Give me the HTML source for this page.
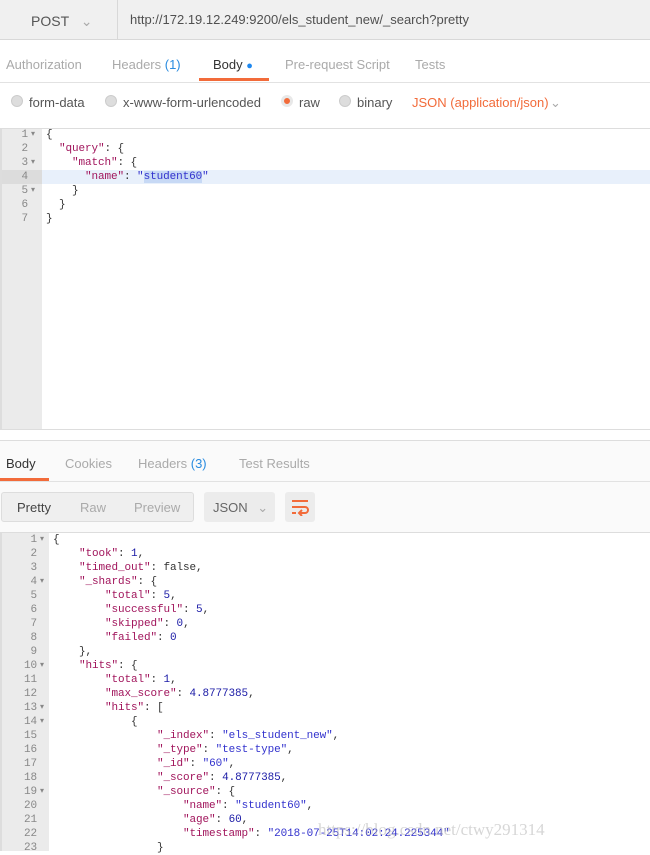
<!DOCTYPE html>
<html><head><meta charset="utf-8"><style>
*{margin:0;padding:0;box-sizing:border-box}
body{width:650px;height:851px;overflow:hidden;background:#fff;font-family:"Liberation Sans",sans-serif;position:relative;color:#333}
.abs{position:absolute}
.top{left:0;top:0;width:650px;height:40px;background:#f0f0f0;border-bottom:1px solid #d8d8d8}
.post{left:2px;top:0;width:116px;height:40px;border-right:1px solid #d8d8d8;font-size:14px;color:#555;padding:13px 0 0 29px}
.url{left:130px;top:12px;font-size:13px;color:#505050}
.tab{font-size:13px;color:#aaa;top:57px}
.radio{width:12px;height:12px;border-radius:50%;background:#ddd;border:1px solid #ccc;top:95px}
.rl{font-size:13px;color:#555;top:95px}
.mono{font-family:"Liberation Mono",monospace;font-size:11px;letter-spacing:-0.1px;white-space:pre;line-height:14px}
.k{color:#a1155c}.s{color:#3232cd}.n{color:#1a1aa6}
.ln{color:#888;text-align:right}
</style></head><body>
<div class="abs top"></div>
<div class="abs post">POST <span style="color:#aaa;margin-left:8px">&#8964;</span></div>
<div class="abs url">http://172.19.12.249:9200/els_student_new/_search?pretty</div>

<div class="abs tab" style="left:6px">Authorization</div>
<div class="abs tab" style="left:112px">Headers <span style="color:#2a8ce0">(1)</span></div>
<div class="abs tab" style="left:213px;color:#333">Body <span style="color:#1e88f0;font-size:11px">●</span></div>
<div class="abs" style="left:199px;top:78px;width:70px;height:3px;background:#f26b3a"></div>
<div class="abs tab" style="left:285px">Pre-request Script</div>
<div class="abs tab" style="left:415px">Tests</div>
<div class="abs" style="left:0;top:82px;width:650px;height:1px;background:#e2e2e2"></div>

<div class="abs radio" style="left:11px"></div><div class="abs rl" style="left:29px">form-data</div>
<div class="abs radio" style="left:105px"></div><div class="abs rl" style="left:123px">x-www-form-urlencoded</div>
<div class="abs radio" style="left:281px;background:#f26b3a;border:3px solid #e8e8e8"></div><div class="abs rl" style="left:299px">raw</div>
<div class="abs radio" style="left:339px"></div><div class="abs rl" style="left:357px">binary</div>
<div class="abs rl" style="left:412px;color:#f26b3a">JSON (application/json)</div>
<div class="abs rl" style="left:550px;color:#aaa">&#8964;</div>

<!-- request editor -->
<div class="abs" style="left:0;top:128px;width:650px;height:302px;border-top:1px solid #ddd;border-left:2px solid #ddd;border-bottom:1px solid #ddd"></div>
<div class="abs" style="left:2px;top:129px;width:40px;height:300px;background:#ebebeb"></div>
<div class="abs" style="left:2px;top:170px;width:40px;height:14px;background:#dcdcdc"></div>
<div class="abs" style="left:42px;top:170px;width:608px;height:14px;background:#e8f0fb"></div>
<div class="abs mono ln" style="left:2px;top:128px;width:26px">1
2
3
4
5
6
7</div>
<div class="abs mono" style="left:31px;top:128px;color:#888;font-size:8px">▾

▾

▾</div>
<div class="abs mono" style="left:46px;top:128px;color:#333">{
  <span class="k">"query"</span>: {
    <span class="k">"match"</span>: {
      <span class="k">"name"</span>: <span class="s">"<span style="background:#c7d9f5">student60</span>"</span>
    }
  }
}</div>

<!-- response -->
<div class="abs" style="left:0;top:440px;width:650px;height:92px;background:#fafafa;border-top:1px solid #ddd"></div>
<div class="abs tab" style="left:6px;top:456px;color:#333">Body</div>
<div class="abs tab" style="left:65px;top:456px">Cookies</div>
<div class="abs tab" style="left:138px;top:456px">Headers <span style="color:#2a8ce0">(3)</span></div>
<div class="abs tab" style="left:239px;top:456px">Test Results</div>
<div class="abs" style="left:0;top:478px;width:49px;height:3px;background:#f26b3a"></div>
<div class="abs" style="left:0;top:481px;width:650px;height:1px;background:#e2e2e2"></div>
<div class="abs" style="left:1px;top:492px;width:193px;height:30px;background:#efefef;border:1px solid #ddd;border-radius:3px"></div>
<div class="abs" style="left:17px;top:500px;font-size:13px;color:#444">Pretty</div>
<div class="abs" style="left:80px;top:500px;font-size:13px;color:#aaa">Raw</div>
<div class="abs" style="left:134px;top:500px;font-size:13px;color:#aaa">Preview</div>
<div class="abs" style="left:204px;top:492px;width:71px;height:30px;background:#ececec;border-radius:3px"></div>
<div class="abs" style="left:213px;top:500px;font-size:13px;color:#666">JSON <span style="color:#aaa;margin-left:6px">&#8964;</span></div>
<div class="abs" style="left:285px;top:492px;width:30px;height:30px;background:#ececec;border-radius:3px"></div>
<svg class="abs" style="left:291px;top:498px" width="18" height="18" viewBox="0 0 18 18" fill="none" stroke="#f26b3a" stroke-width="2"><path d="M1 3h16M1 9h13a3 3 0 0 1 0 6h-5M11 12l-3 3 3 3M1 15h4"/></svg>

<div class="abs" style="left:0;top:532px;width:650px;height:319px;border-top:1px solid #ddd;border-left:2px solid #ddd"></div>
<div class="abs" style="left:2px;top:533px;width:47px;height:318px;background:#ebebeb"></div>
<div class="abs mono ln" style="left:2px;top:533px;width:35px">1
2
3
4
5
6
7
8
9
10
11
12
13
14
15
16
17
18
19
20
21
22
23</div>
<div class="abs mono" style="left:40px;top:533px;color:#888;font-size:8px">▾


▾





▾


▾
▾




▾</div>
<div class="abs mono" style="left:53px;top:533px;color:#333">{
    <span class="k">"took"</span>: <span class="n">1</span>,
    <span class="k">"timed_out"</span>: false,
    <span class="k">"_shards"</span>: {
        <span class="k">"total"</span>: <span class="n">5</span>,
        <span class="k">"successful"</span>: <span class="n">5</span>,
        <span class="k">"skipped"</span>: <span class="n">0</span>,
        <span class="k">"failed"</span>: <span class="n">0</span>
    },
    <span class="k">"hits"</span>: {
        <span class="k">"total"</span>: <span class="n">1</span>,
        <span class="k">"max_score"</span>: <span class="n">4.8777385</span>,
        <span class="k">"hits"</span>: [
            {
                <span class="k">"_index"</span>: <span class="s">"els_student_new"</span>,
                <span class="k">"_type"</span>: <span class="s">"test-type"</span>,
                <span class="k">"_id"</span>: <span class="s">"60"</span>,
                <span class="k">"_score"</span>: <span class="n">4.8777385</span>,
                <span class="k">"_source"</span>: {
                    <span class="k">"name"</span>: <span class="s">"student60"</span>,
                    <span class="k">"age"</span>: <span class="n">60</span>,
                    <span class="k">"timestamp"</span>: <span class="s">"2018-07-25T14:02:24.225344"</span>
                }</div>
<div class="abs" style="left:318px;top:820px;font-family:'Liberation Serif',serif;font-size:17px;color:rgba(180,180,180,0.55)">https://blog.csdn.net/ctwy291314</div>
</body></html>
